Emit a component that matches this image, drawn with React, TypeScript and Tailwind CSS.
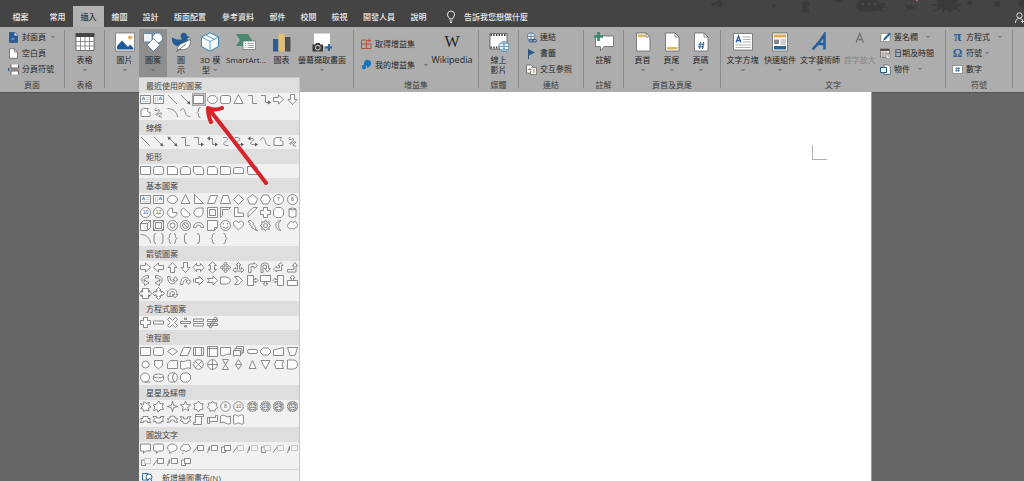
import React from 'react';

type Shape = { d: string; light?: string; fill?: string; blue?: string; t?: string };

const s = (d: string, t?: string): Shape => ({ d, t });

const circ = (cx: number, cy: number, r: number) =>
  `M${cx - r} ${cy}a${r} ${r} 0 1 0 ${2 * r} 0a${r} ${r} 0 1 0 ${-2 * r} 0Z`;

const oval = (cx: number, cy: number, rx: number, ry: number) =>
  `M${cx - rx} ${cy}a${rx} ${ry} 0 1 0 ${2 * rx} 0a${rx} ${ry} 0 1 0 ${-2 * rx} 0Z`;

const star = (n: number, outer: number, inner: number) => {
  const pts: string[] = [];
  for (let i = 0; i < n * 2; i++) {
    const r = i % 2 === 0 ? outer : inner;
    const a = (Math.PI * i) / n - Math.PI / 2;
    pts.push(`${(6.5 + r * Math.cos(a)).toFixed(2)} ${(6.5 + r * Math.sin(a)).toFixed(2)}`);
  }
  return `M${pts.join('L')}Z`;
};

const textBox: Shape = { d: 'M1.5 2.5H11.5V10.5H1.5Z', light: 'M7.5 4.5H10.5M7.5 6.5H10.5M3 8.700H10.5', blue: 'M3 7L4.5 3.800L6 7M3.500 6H5.500' };
const verticalBox: Shape = { d: 'M1.5 2.5H11.5V10.5H1.5Z', light: 'M3.500 4V9M5.500 4V9', blue: 'M7 7L8.500 3.800L10 7M7.500 6H9.500' };
const line = s('M2 2L11 11');
const lineArrow: Shape = { d: 'M2 2L10 10', fill: 'M11.5 11.500L7.800 10.300L10.300 7.800Z' };
const lineBoth: Shape = { d: 'M3 3L10 10', fill: 'M11.5 11.500L7.800 10.300L10.300 7.800ZM1.500 1.500L5.200 2.700L2.700 5.200Z' };
const rect = s('M1.5 2.5H11.5V10.5H1.5Z');
const ellipse = s(oval(6.5, 6.5, 5, 4));
const rounded = s('M3.5 2.5H9.5Q11.5 2.5 11.5 4.5V8.5Q11.5 10.5 9.5 10.5H3.5Q1.5 10.5 1.5 8.5V4.5Q1.5 2.5 3.5 2.5Z');
const triangle = s('M6.5 1.5L11 10.5H2Z');
const elbow = s('M2 2.5H6.5V10.5H11');
const elbowArrow: Shape = { d: 'M2 2.5H6.5V9.5H10', fill: 'M12 9.5L9 7.500V11.500Z' };
const elbowBoth: Shape = { d: 'M3 3.5H6.5V9.5H10', fill: 'M12 9.5L9 7.500V11.500ZM1 3.500L4 1.500V5.500Z' };
const curve = s('M4 2.5C10 2 9.5 5 6.5 6.5S4 11 9.5 10.5');
const curveArrow: Shape = { d: 'M3 2.5C9 2 8.5 5 6 6.5S4 10 9.500 9.5', fill: 'M12 9.500L9 7.500V11.500Z' };
const curveBoth: Shape = { d: 'M4 3.5C9 3 8.5 5 6 6.5S4 10 9.500 9.5', fill: 'M12 9.500L9 7.500V11.500ZM1.500 3.500L4.500 1.500V5.500Z' };
const wave = s('M1.5 5C3 1.500 5 2 6 5.500S8 11 11.500 10.500');
const freeform = s('M2 4L4.500 2.500H9.5C7.500 4.500 8 6 11 6.500V10.500H2Z');
const scribble = s('M4.500 2C2 3 3 5.500 5 4.500S8 3 7 5.500S2.500 8 4 9S8.500 5.500 9.500 7S6 9.500 7 10.500S9.500 10 9.500 11.500');
const arc = s('M1.5 2.5C7 2.5 11 6 11.5 11');
const leftBrace = s('M8.5 1.5Q6.5 1.5 6.5 3.5V5L5 6.5L6.5 8V9.5Q6.5 11.5 8.5 11.5');
const rightBrace = s('M4.5 1.5Q6.5 1.5 6.5 3.5V5L8 6.5L6.5 8V9.5Q6.5 11.5 4.5 11.5');
const arrowRight = s('M1.5 4.5H6.5V2L11.5 6.5L6.5 11V8.5H1.5Z');
const arrowLeft = s('M11.5 4.5H6.5V2L1.5 6.5L6.5 11V8.5H11.5Z');
const arrowDown = s('M4.5 1.5V6.5H2L6.5 11.5L11 6.5H8.5V1.5Z');
const arrowUp = s('M4.5 11.5V6.5H2L6.5 1.5L11 6.5H8.5V11.5Z');
const snip1 = s('M1.5 2.5H9L11.5 5V10.5H1.5Z');
const plus = s('M4.5 1.5H8.5V4.5H11.5V8.5H8.5V11.5H4.5V8.5H1.5V4.5H4.5Z');

const lineCallout = (lead: string, dim: boolean): Shape =>
  dim ? { d: lead, light: 'M5.5 3.5H11.5V8.5H5.5Z' } : { d: `${lead}M5.5 3.5H11.5V8.5H5.5Z` };
const leadA = 'M1 10.5L5.5 4.5';
const leadB = 'M1.5 11L3.5 4.5V8.5';
const leadC = 'M5.5 5H2.5V10.5H6.5V8.5';

const sections: { title: string; selected?: number; shapes: Shape[] }[] = [
  {
    title: '最近使用的圖案',
    selected: 4,
    shapes: [textBox, verticalBox, line, lineArrow, rect, ellipse, rounded, triangle, elbow, elbowArrow, arrowRight, arrowDown, freeform, scribble, arc, wave, leftBrace],
  },
  {
    title: '線條',
    shapes: [line, lineArrow, lineBoth, elbow, elbowArrow, elbowBoth, curve, curveArrow, curveBoth, wave, freeform, scribble],
  },
  {
    title: '矩形',
    shapes: [
      rect,
      rounded,
      snip1,
      s('M4 2.5H9L11.5 5V10.5H1.5V5Z'),
      s('M1.5 2.5H9L11.5 5V10.5H4L1.5 8Z'),
      s('M3.5 2.5H9L11.5 5V10.5H1.5V4.5Q1.5 2.5 3.5 2.5Z'),
      s('M1.5 2.5H9.5Q11.5 2.5 11.5 4.5V10.5H1.5Z'),
      s('M3.5 3.5H9.5Q11.5 3.5 11.5 5.5V9.5H1.5V5.5Q1.5 3.5 3.5 3.5Z'),
      s('M1.5 2.5H9.5Q11.5 2.5 11.5 4.5V10.5H3.5Q1.5 10.5 1.5 8.5Z'),
    ],
  },
  {
    title: '基本圖案',
    shapes: [
      textBox,
      verticalBox,
      ellipse,
      triangle,
      s('M2.5 1.5V10.5H11.5Z'),
      s('M4.5 2.5H11.5L8.5 10.5H1.5Z'),
      s('M4 2.5H9L11.5 10.5H1.5Z'),
      s('M6.5 1.5L11.5 6.5L6.5 11.5L1.5 6.5Z'),
      s('M6.5 1.5L11.5 5.5L9.5 11H3.5L1.5 5.5Z'),
      s('M4 2H9L11.5 6.5L9 11H4L1.5 6.5Z'),
      s(circ(6.5, 6.5, 5), '7'),
      s(circ(6.5, 6.5, 5), '8'),
      s(circ(6.5, 6.5, 5), '10'),
      s(circ(6.5, 6.5, 5), '12'),
      s('M6.5 6.5V2A4.7 4.7 0 1 0 11 6.5Z'),
      s('M4.500 2C.5 4 1 10 6 11C9 11.500 11 9.500 11 8Z'),
      s('M6.5 2H11V6.5A4.5 4.5 0 1 1 6.5 2Z'),
      s('M1.5 1.5H11.5V11.5H1.5ZM3.5 3.5H9.5V9.5H3.5Z'),
      s('M1.5 1.5H11.5L9.5 3.5H3.5V9.5L1.5 11.5Z'),
      s('M2.5 1.5H6V7H11.5V10.5H2.5Z'),
      s('M7.5 1.5H11.5L2 11V6.5Z'),
      plus,
      s('M4 1.5H9L11.5 4V9L9 11.5H4L1.5 9V4Z'),
      s('M3 3Q6.5 1 10 3V10.5Q6.5 12.5 3 10.5ZM3 3Q6.5 5 10 3'),
      s('M1.5 4.5H8.5V11.5H1.5ZM1.5 4.5L4.5 1.5H11.5V8.5L8.5 11.5M8.5 4.5L11.5 1.5'),
      s('M1.5 1.5H11.5V11.5H1.5ZM3.5 3.5H9.5V9.5H3.5ZM1.5 1.5L3.5 3.5M11.5 1.5L9.5 3.5M1.5 11.5L3.5 9.5M11.5 11.5L9.5 9.5'),
      s(circ(6.5, 6.5, 5) + circ(6.5, 6.5, 2.5)),
      s(circ(6.5, 6.5, 5) + circ(6.5, 6.5, 3) + 'M4.500 4.500L8.500 8.500'),
      s('M1.5 8.5A5 5 0 0 1 11.5 8.5H9A2.5 2.5 0 0 0 4 8.5Z'),
      s('M1.5 1.5H11.5V8.5L8.5 11.5H1.5ZM11.5 8.5H8.5V11.5'),
      s(circ(6.5, 6.5, 5) + 'M3.5 7.5Q6.5 11 9.5 7.5M4.5 4V5.5M8.5 4V5.5'),
      s('M6.5 11L2 6.5C0 3 4.5 0 6.5 4C8.5 0 13 3 11 6.5Z'),
      s('M2 2L5 1.5L8 5L7 5.5L10 8.5L9 9L11.5 12L5.5 8.5L6.5 8L3.5 5.5L4.5 5Z'),
      s(star(8, 5.4, 3.6) + circ(6.5, 6.5, 2)),
      s('M9 1.5C2 2 2 11 9 11.5C5.5 9 5.5 4 9 1.5Z'),
      s('M3 9C.5 8 1 5 3 5C3 2 6 2 7 3.5C9 1.5 11 3 10.5 4.5C12.5 6 11.5 8.5 9.5 8.5C9 10.5 6.5 10.5 6 9C5 10.5 3.5 10 3 9Z'),
      arc,
      s('M4 1.5Q2 1.5 2 4V9Q2 11.5 4 11.5M9 1.5Q11 1.5 11 4V9Q11 11.5 9 11.5'),
      s('M5 1.5Q3.5 1.5 3.5 3.5V5L2 6.5L3.5 8V9.5Q3.5 11.5 5 11.5M8 1.5Q9.5 1.5 9.5 3.5V5L11 6.5L9.5 8V9.5Q9.5 11.5 8 11.5'),
      s('M8 1.5Q5.5 1.5 5.5 4V9Q5.5 11.5 8 11.5'),
      s('M5 1.5Q7.5 1.5 7.5 4V9Q7.5 11.5 5 11.5'),
      leftBrace,
      rightBrace,
    ],
  },
  {
    title: '箭號圖案',
    shapes: [
      arrowRight,
      arrowLeft,
      arrowUp,
      arrowDown,
      s('M1 6.5L4.500 2.500V4.500H8.500V2.500L12 6.5L8.500 10.500V8.500H4.500V10.500Z'),
      s('M6.5 1L10.500 4.500H8.500V8.500H10.500L6.5 12L2.500 8.500H4.500V4.500H2.500Z'),
      s('M6.5 1L8.5 3.500H7.200V5.800H9.500V4.500L12 6.5L9.500 8.500V7.200H7.200V9.500H8.5L6.5 12L4.5 9.500H5.800V7.200H3.500V8.5L1 6.5L3.500 4.5V5.800H5.800V3.500H4.5Z'),
      s('M6.5 1.5L9 4H7.5V8H9.5V6.5L12 9L9.5 11.5V10H3.5V11.5L1 9L3.5 6.5V8H5.5V4H4Z'),
      s('M2.5 11.5V5Q2.5 3 4.5 3H8V1.5L11.5 4.5L8 7.5V5.5H5V11.5Z'),
      s('M2 11.5V5Q2 2 5.5 2H7Q9.5 2 9.5 5V7.5H11.5L8.5 11L5.5 7.5H7.5V5Q7.5 4 6.5 4H5Q4 4 4 5V11.5Z'),
      s('M1.5 8L4.5 5.5V7H7.5V4.5H6L8.5 1.5L11 4.5H9.5V9.5H4.5V11Z'),
      s('M1.5 8.5H8V5H6.5L9 1.5L11.5 5H10V11H1.5Z'),
      s('M9.5 1.500C2 1.500 1 7.500 5.500 9.500V11.500L10 9L5.500 6V7.500C3.500 5.500 5.500 4 9.500 4Z'),
      s('M3.500 1.500C11 1.500 12 7.500 7.500 9.500V11.500L3 9L7.500 6V7.500C9.500 5.500 7.500 4 3.500 4Z'),
      s('M1.500 2.500H4C4 8 7.500 8.500 8.500 6H7L9.500 2.500L12 6H10.500C9 11.500 1.500 11.500 1.500 2.500Z'),
      s('M1.500 10.500H4C4 5 7.500 4.500 8.500 7H7L9.500 10.500L12 7H10.500C9 1.500 1.500 1.500 1.500 10.500Z'),
      s('M1.5 4.5V8.5M3.5 4.5H7V2L11.5 6.5L7 11V8.5H3.5Z'),
      s('M1.5 4.5H7V2L11.5 6.5L7 11V8.5H1.5L3 6.5Z'),
      s('M1.5 3H7.5Q11.5 4 11.5 6.5T7.5 10H1.5Z'),
      s('M2.5 2.5H6.5L10.5 6.5L6.5 10.5H2.5L6 6.5Z'),
      s('M1.5 1.5H7.5V11.5H1.5ZM7.5 5.5H9.5V4L12 6.5L9.5 9V7.5H7.5'),
      s('M1.5 1.5H11.5V7.5H1.5ZM5.5 7.5V9.5H4L6.5 12L9 9.5H7.5V7.5'),
      s('M5.5 1.5H11.5V11.5H5.5ZM5.5 5.5H3.5V4L1 6.5L3.5 9V7.5H5.5'),
      s('M1.5 6.5H11.5V11.5H1.5ZM5.5 6.5V4H4L6.5 1L9 4H7.5V6.5'),
      s('M3.500 1.500H9.500V5H10.500V3.500L12.500 6.500L10.500 9.500V8H9.500V11.500H3.500V8H2.500V9.500L.5 6.500L2.500 3.500V5H3.500Z'),
      s('M6.500 .5L9 3H7.800V4H9V5.200H10V4L12.500 6.500L10 9V7.800H9V9H7.800V10H9L6.500 12.500L4 10H5.200V9H4V7.800H3V9L.5 6.500L3 4V5.200H4V4H5.200V3H4Z'),
      s('M1.500 9.500C0 4 4 2 6.500 2C10 2 11.500 5 10.500 7.500H12L9 11L6.500 7.500H8.500C9 5 7 4 6 4.500C4 5 3.500 7 4 9.500ZM4 9.500H6.500V7.500'),
    ],
  },
  {
    title: '方程式圖案',
    shapes: [
      plus,
      s('M1.5 5H11.5V8H1.5Z'),
      s('M3.5 1.5L6.5 4.5L9.5 1.5L11.5 3.5L8.5 6.5L11.5 9.5L9.5 11.5L6.5 8.5L3.5 11.5L1.5 9.5L4.5 6.5L1.5 3.5Z'),
      s('M1.5 5.5H11.5V7.5H1.5ZM5.5 2H7.5V3.5H5.5ZM5.5 9.5H7.5V11H5.5Z'),
      s('M1.5 3H11.5V5.5H1.5ZM1.5 7.5H11.5V10H1.5Z'),
      s('M1.5 3.5H11.5V5.5H1.5ZM1.5 7.5H11.5V9.5H1.5ZM9 1L11 2L5 12L3 11Z'),
    ],
  },
  {
    title: '流程圖',
    shapes: [
      rect,
      rounded,
      s('M6.5 3L11.5 6.5L6.5 10L1.5 6.5Z'),
      s('M4.5 2.5H12L8.5 10.5H1Z'),
      s('M1.5 2.5H11.5V10.5H1.5ZM3.5 2.5V10.5M9.5 2.5V10.5'),
      s('M1.5 1.5H11.5V11.5H1.5ZM3.5 1.5V11.5M1.5 3.5H11.5'),
      s('M1.5 2.5H11.5V9.5Q9 8 6.5 10T1.5 10Z'),
      s('M1.5 5.5H8.5V11Q5 9.5 1.5 11ZM3 5.5V3.5H10V9H8.5M4.5 3.5V1.5H11.5V7.5H10'),
      s('M3 4.5H10Q11.5 4.5 11.5 6.5T10 8.5H3Q1.5 8.5 1.5 6.5T3 4.5Z'),
      s('M4 3H9L11.5 5.5V7.5L9 10H4L1.5 7.5V5.5Z'),
      s('M1.5 5L11.5 2.5V10.5H1.5Z'),
      s('M1.5 2.5H11.5L9 10.5H4Z'),
      s(circ(6.5, 6.5, 3.5)),
      s('M2.5 2.5H10.5V7.5L6.5 11L2.5 7.5Z'),
      s('M4.5 2.5H11.5V10.5H1.5V5.5Z'),
      s('M1.5 3Q4 4.5 6.5 3T11.5 2.5V10.5Q9 9 6.5 10.5T1.5 10.5Z'),
      s(circ(6.5, 6.5, 4.8) + 'M3 3L10 10M10 3L3 10'),
      s(circ(6.5, 6.5, 4.8) + 'M6.5 1.5V11.5M1.5 6.5H11.5'),
      s('M3.5 1.5H9.5L3.5 11.5H9.5Z'),
      s('M6.5 1.5L9.5 6.5L6.5 11.5L3.5 6.5ZM3.5 6.5H9.5'),
      s('M6.5 2.5L10 10.5H3Z'),
      s('M2 2.5H11L6.5 11Z'),
      s('M4 2.5H11.5Q8.5 6.5 11.5 10.5H4Q1 6.5 4 2.5Z'),
      s('M1.5 2H6.5Q11.5 2 11.5 6.5T6.5 11H1.5Z'),
      s(circ(6, 6.5, 4.5) + 'M6 11H11.5'),
      s(oval(6.5, 5, 5, 2) + 'M1.5 5V8.5Q2 10.5 6.5 10.5T11.5 8.5V5'),
      s('M4.5 2H9Q11.5 3 11.5 6.5T9 11H4.5Q2 10 2 6.5T4.5 2ZM9 2Q6.5 3 6.5 6.5T9 11'),
      s('M4 2H9L11.5 4.5V8.5L9 11H4L1.5 8.5V4.5Z'),
    ],
  },
  {
    title: '星星及綵帶',
    shapes: [
      s('M5 1.500L7 3.500L10.500 2.500L9.500 5L12 7L9.500 8L10 11L7 10L4.500 11.500L4 9L1.500 8.500L3.500 6.500L1.500 3.500L4.500 4.500Z'),
      s('M7 1L8.500 4L11.500 3.500L10 6.500L11.500 9.500L8.500 9.500L6 12L5 9.500L1.500 10.500L3 7L1 5L4 4.500Z'),
      s(star(4, 5.2, 1.6)),
      s(star(5, 5.4, 2.4)),
      s(star(6, 5.4, 3.6)),
      s(star(7, 5.4, 3.8)),
      s(circ(6.5, 6.5, 4.8), '8'),
      s(circ(6.5, 6.5, 4.8), '10'),
      { d: star(12, 5.4, 4.3) + circ(6.5, 6.5, 3.4), t: '12' },
      { d: star(14, 5.4, 4.3) + circ(6.5, 6.5, 3.4), t: '16' },
      { d: star(16, 5.4, 4.3) + circ(6.5, 6.5, 3.4), t: '24' },
      { d: star(18, 5.4, 4.3) + circ(6.5, 6.5, 3.4), t: '32' },
      s('M1 9.5L2.5 7.5L1.5 5.5H4V3.5H9V5.5H11.5L10.5 7.5L12 9.5H8.5V8H4.5V9.5Z'),
      s('M1 3.5L2.5 5.5L1.5 8.5H4V10H9V8.5H11.5L10.5 5.5L12 3.5H8.5V5H4.5V3.5Z'),
      s('M1 9.5L2.5 7.5L1.5 5.5L4 5V3.5Q6.5 2.5 9 3.5V5L11.5 5.5L10.5 7.5L12 9.5L8.5 9V7.5Q6.5 6.5 4.5 7.5V9Z'),
      s('M1 3.5L2.5 5.5L1.5 8L4 8.5V10Q6.5 11 9 10V8.5L11.5 8L10.5 5.5L12 3.5L8.5 4V5.5Q6.5 6.5 4.5 5.5V4Z'),
      s('M3.5 1.5H11.5V3.5H9.5V11.5H1.5V9.5H3.5ZM3.5 3.5H9.5'),
      s('M1.5 4.5H9.5V2.5H11.5V8.5H3.5V10.5H1.5ZM3.5 4.5V8.5'),
      s('M1.5 3Q4 1 6.5 3T11.5 3V10.5Q9 12 6.5 10T1.5 10Z'),
      s('M1.5 2.5Q3 1 4.5 2.5T8 2.5T11.5 2.5V10.5Q10 12 8 10.5T4.5 10.5T1.5 10.5Z'),
    ],
  },
  {
    title: '圖說文字',
    shapes: [
      s('M1.5 2H11.5V9H6.5L4.5 11.5V9H1.5Z'),
      s('M3 2H10Q11.5 2 11.5 3.5V7.5Q11.5 9 10 9H6.5L4.5 11.5V9H3Q1.5 9 1.5 7.5V3.5Q1.5 2 3 2Z'),
      s('M4 9.5C0 7 1 2 6.5 2S13 9 6.5 9.5L3.5 11.5Z'),
      s('M4 9C.5 8.5 1 5 3 5C3 2 6 1.5 7 3C9 1.5 11 3 10.5 4.5C12.5 6 11.5 8.5 9 8.5C8 10 6 10 5.5 8.5ZM3 11.5H4.5'),
      lineCallout(leadA, false),
      lineCallout(leadB, false),
      lineCallout(leadC, false),
      lineCallout(leadA, true),
      lineCallout(leadB, true),
      lineCallout(leadC, true),
      lineCallout(leadA, true),
      lineCallout(leadB, true),
      lineCallout(leadC, true),
      lineCallout(leadA, false),
      lineCallout(leadB, false),
      lineCallout(leadC, false),
    ],
  },
];

function ShapeIcon({ shape }: { shape: Shape }) {
  return (
    <svg viewBox="0 0 13 13" className="size-[13px] shrink-0" fill="none" stroke="#707070" strokeWidth="0.8" aria-hidden="true">
      <path d={shape.d} fill={/Z/.test(shape.d) ? '#fbfbfb' : 'none'} fillRule="evenodd" />
      {shape.light && <path d={shape.light} stroke="#bcbcbc" />}
      {shape.blue && <path d={shape.blue} stroke="#4f7f9f" />}
      {shape.fill && <path d={shape.fill} fill="#5c5c5c" stroke="none" />}
      {shape.t && (
        <text x="6.5" y="8.3" fontSize="5" fontFamily="Liberation Sans, sans-serif" textAnchor="middle" fill="#555" stroke="none">
          {shape.t}
        </text>
      )}
    </svg>
  );
}

function Chevron({ dim }: { dim?: boolean }) {
  return (
    <svg viewBox="0 0 6 4" className="h-1 w-1.5 shrink-0" fill="none" stroke={dim ? '#8c8c8c' : '#555'} aria-hidden="true">
      <path d="M1.5 1L3 2.5L4.5 1" />
    </svg>
  );
}

function Group({ label, width, children }: { label: string; width: string; children: React.ReactNode }) {
  return (
    <>
      <section aria-label={label || undefined} className={`flex shrink-0 flex-col ${width}`}>
        <div className="flex h-12">{children}</div>
        <div className="h-[15px] text-center leading-[15px] text-[#3c3c3c]">{label}</div>
      </section>
      <div className="mt-px h-[58px] w-px shrink-0 bg-[#8a8a8a]" />
    </>
  );
}

function Big({ icon, lines, width, chevron, inlineChevron, active, dim }: {
  icon: React.ReactNode;
  lines: string[];
  width: string;
  chevron?: boolean;
  inlineChevron?: boolean;
  active?: boolean;
  dim?: boolean;
}) {
  return (
    <button
      type="button"
      disabled={dim}
      className={`flex h-12 shrink-0 flex-col items-center whitespace-nowrap pt-[3px] leading-[10px] ${width} ${active ? 'bg-[#8e8e8e]' : ''} ${dim ? 'text-[#868686]' : ''}`}
    >
      <span className="mb-[3px] flex h-5 items-center justify-center">{icon}</span>
      {lines.map((l, i) => (
        <span key={l} className="flex items-center gap-0.5">
          {l}
          {inlineChevron && i === lines.length - 1 && <Chevron />}
        </span>
      ))}
      {chevron && (
        <span className="flex h-[10px] items-center">
          <Chevron dim={dim} />
        </span>
      )}
    </button>
  );
}

function Small({ icon, label, chevron, tall, gap = 'gap-1' }: {
  icon: React.ReactNode;
  label: string;
  chevron?: boolean;
  tall?: boolean;
  gap?: string;
}) {
  return (
    <button type="button" className={`flex items-center whitespace-nowrap ${gap} ${tall ? 'h-[21px]' : 'h-4'}`}>
      <span className="flex items-center gap-[3px]">
        <span className="flex size-[11px] shrink-0 items-center justify-center">{icon}</span>
        {label}
      </span>
      {chevron && <Chevron />}
    </button>
  );
}

const I = ({ w = 20, h = 20, children }: { w?: number; h?: number; children: React.ReactNode }) => (
  <svg width={w} height={h} viewBox={`0 0 ${w} ${h}`} fill="none" aria-hidden="true">
    {children}
  </svg>
);

const icons = {
  cover: <I w={11} h={11}><path d="M1.500 .5H7L9.5 3V10.500H1.500Z" fill="#2b5c98" stroke="#1f4778" strokeWidth=".6" /><path d="M6.500 .5V3.5H9.700Z" fill="#e4edf6" /><path d="M3.500 7H6.500" stroke="#a9c4e2" /></I>,
  blank: <I w={11} h={11}><path d="M1.500 .8H6.5L9.5 4V10.3H1.500Z" fill="#fff" stroke="#555" strokeWidth=".7" /><path d="M6.5 1V4H9.5" stroke="#555" strokeWidth=".7" /></I>,
  pageBreak: <I w={11} h={11}><path d="M3 .5V4H10.5V.5M3 10.5V7H10.5V10.5" fill="#fff" stroke="#444" strokeWidth=".8" /><path d="M3 5.5H11" stroke="#555" strokeWidth=".6" strokeDasharray="1.5 .8" /><path d="M0 3.5L2 5.5L0 7.5Z" fill="#2b5c98" /></I>,
  table: <I><path d="M1 1.5H19V18.5H1Z" fill="#fff" stroke="#555" strokeWidth=".8" /><path d="M.8 1H19.2V5H.8Z" fill="#444" /><path d="M1 9.500H19M1 14H19M5.5 5V18.5M10 5V18.5M14.5 5V18.5" stroke="#777" strokeWidth=".8" /></I>,
  picture: <I><path d="M.5 1H19.5V19H.5Z" fill="#fff" stroke="#666" strokeWidth=".7" /><circle cx="15" cy="5.5" r="2" fill="#e3b04f" /><path d="M2 17.5V14L7 8.5L13 15L15 12.5L18.5 16V17.5Z" fill="#1f5b96" /></I>,
  shapes: <I><circle cx="14.5" cy="6" r="5" fill="#fff" stroke="#4b78a5" strokeWidth=".8" /><path d="M.5 1.5H9V10H.5Z" fill="#eef4fa" stroke="#4b78a5" strokeWidth=".8" /><path d="M10.5 6.5L17 13L10.5 19.5L4 13Z" fill="#fff" stroke="#4b78a5" strokeWidth=".8" /></I>,
  duck: <I><path d="M9.500 4.500C9.500 0 15.500 -.5 16 4L19 5L16 6.500C17 8 17.500 9.500 16 11L9 14H6C2 13 .5 9.500 1 5.500L5.500 7.500L11 7.500Z" fill="#235c95" /><path d="M6.500 18C6.500 13.500 9 12 12 11L19.500 7.5C20 14 17 18.500 9 17.500Z" fill="#fff" stroke="#555" strokeWidth=".7" /><path d="M5 20L15 12" stroke="#555" strokeWidth=".8" /></I>,
  cube: <I><path d="M10 .8L18.5 5V14.5L10 19.2L1.5 14.5V5Z" fill="#f5fafd" stroke="#3f86b5" /><path d="M1.5 5L10 9.5L18.5 5M10 9.5V19M6 3L14.5 7.5" stroke="#3f86b5" strokeWidth=".8" /></I>,
  smartArt: <I><path d="M0 2H12L16 8L12 14H0L4 8Z" fill="#4a8a70" /><path d="M7 9H19.5V17.5H7Z" fill="#fff" stroke="#666" strokeWidth=".7" /><path d="M9 11.500H10M9 13.500H10M9 15.500H10M11.5 11.500H18M11.5 13.500H18M11.5 15.500H18" stroke="#888" strokeWidth=".8" /></I>,
  chart: <I><path d="M1 7H6.5V19.5H1Z" fill="#255e97" /><path d="M6.5 1.5H12.5V19.5H6.5Z" fill="#e3be74" /><path d="M13 5H18.5V19.5H13Z" fill="#505050" /></I>,
  screenshot: <I><path d="M2 1.5H18V14H2Z" fill="#fff" /><path d="M.5 12.5H3L4 11H7.5L8.5 12.5H11V19.5H.5Z" fill="#3a3a3a" /><circle cx="5.800" cy="15.7" r="2.4" stroke="#ddd" fill="#3a3a3a" /><path d="M17 12V19M13.5 15.5H20.5" stroke="#24609b" strokeWidth="1.8" /></I>,
  store: <I w={11} h={11}><path d="M.5 2H5.5V10.5H.5ZM.5 6H10V10.5H5.5" stroke="#bb5038" strokeWidth="1" /><path d="M8.2 .5V4.500M6.2 2.500H10.2" stroke="#bb5038" strokeWidth="1" /></I>,
  myAddins: <I w={11} h={11}><path d="M6 .8C10 1 11 4 9.5 6.5L6.5 9L5.5 6.5L3 6C2.5 3 4 1 6 .8Z" fill="#1675b9" /><circle cx="3" cy="8" r="2.2" fill="#1675b9" /></I>,
  video: <I><path d="M1 1.5H18V17H1Z" fill="#fff" stroke="#555" strokeWidth=".8" /><path d="M1.5 3H18M1.5 15.5H18" stroke="#444" strokeWidth="2" strokeDasharray="1.5 1.2" /><circle cx="15" cy="14.5" r="5" fill="#eaf4fa" stroke="#377aa8" strokeWidth=".8" /><path d="M10 14.5H20M15 9.5V19.5M12 11Q15 13.5 18 11M12 18Q15 15.5 18 18" stroke="#377aa8" strokeWidth=".7" /></I>,
  link: <I w={11} h={11}><circle cx="5" cy="4.5" r="3.8" fill="#dfe9f1" stroke="#4c708f" strokeWidth=".8" /><path d="M1.5 4.5H8.5M5 1V8" stroke="#4c708f" strokeWidth=".7" /><rect x="3" y="7.5" width="4" height="2.5" rx="1.2" stroke="#255b8d" /><rect x="6.5" y="7.5" width="4" height="2.5" rx="1.2" stroke="#255b8d" /></I>,
  bookmark: <I w={11} h={11}><path d="M2.5 1V11" stroke="#355371" /><path d="M3 1.5L9 4.5L3 7.5Z" fill="#235c95" /></I>,
  crossRef: <I w={11} h={11}><path d="M.5 1H5L7 3V9H.5Z" fill="#fff" stroke="#555" strokeWidth=".7" /><path d="M5.5 3.5H10.5V10.5H4.5V7" fill="#f2efe4" stroke="#666" strokeWidth=".7" /><path d="M1.5 5.5H5M3.5 4L5 5.5L3.5 7M7 6H9M7 8H9" stroke="#7b6a4c" strokeWidth=".7" /></I>,
  comment: <I><path d="M1.500 4H19.5V14.5H10L6.5 18.5V14.5H1.500Z" fill="#fff" stroke="#5d6b66" strokeWidth=".8" /><path d="M4.5 0V9M0 4.5H9" stroke="#39886c" strokeWidth="2.6" /></I>,
  header: <I><path d="M3.5 1H13L17 5V19H3.5Z" fill="#fff" stroke="#666" strokeWidth=".8" /><path d="M13 1V5H17" stroke="#666" strokeWidth=".8" /><path d="M5 2.5H12V5H5Z" fill="#e0b65e" /></I>,
  footer: <I><path d="M3.5 1H13L17 5V19H3.5Z" fill="#fff" stroke="#666" strokeWidth=".8" /><path d="M13 1V5H17" stroke="#666" strokeWidth=".8" /><path d="M5 15H15.5V17.5H5Z" fill="#e0b65e" /></I>,
  pageNo: <I><path d="M3.5 1H13L17 5V19H3.5Z" fill="#fff" stroke="#666" strokeWidth=".8" /><path d="M13 1V5H17" stroke="#666" strokeWidth=".8" /><path d="M9.5 10L8.5 17M12.5 10L11.5 17M7.5 12.2H13.5M7 14.8H13" stroke="#2a629c" /></I>,
  textBox: <I><path d="M.5 1.5H19.5V18H.5Z" fill="#fff" stroke="#666" strokeWidth=".8" /><path d="M3 10.500L5.5 4L8 10.500M4 8.500H7" stroke="#275f99" strokeWidth="1.3" /><path d="M10 5H18M10 7.5H18M10 10H18M2.5 13H18M2.5 15.5H18" stroke="#aaa" strokeWidth=".9" /></I>,
  quickParts: <I><path d="M2.5 1H17.5V19H2.5Z" fill="#fff" stroke="#666" strokeWidth=".8" /><path d="M4 2.5H16V5.5H4Z" fill="#e0ab51" /><path d="M4 7.5H9V12H4Z" fill="#888" /><path d="M10.5 8H16M10.5 10H16M10.5 12H16" stroke="#999" /><path d="M4 14H16V17.5H4Z" fill="#2c6394" /></I>,
  wordArt: <I><path d="M2.500 17.500Q9 11.500 14.500 2.500L14.500 17.500M6 12H15" stroke="#285f9c" strokeWidth="2.5" /></I>,
  dropCap: <I><path d="M6 10.5L9.8 1.5L13.5 10.5M7.2 7.5H12.3" stroke="#747474" strokeWidth="1.3" /></I>,
  signature: <I w={11} h={11}><path d="M1 1.5H10V9.5H1Z" fill="#fff" stroke="#777" strokeWidth=".6" /><path d="M3 9L4 6L9.5 .5L11 2L5.5 7.5Z" fill="#28639d" /></I>,
  date: <I w={11} h={11}><path d="M.5 1H9.5V9H.5Z" fill="#fff" stroke="#555" strokeWidth=".7" /><path d="M.5 1H9.5V3H.5Z" fill="#5d4c43" /><path d="M.5 5H9.5M.5 7H9.5M3 3V9M6 3V9" stroke="#877164" strokeWidth=".7" /><circle cx="8.2" cy="8.2" r="2.5" fill="#eee" stroke="#777" strokeWidth=".7" /><path d="M8.2 6.5V8.2H9.5" stroke="#555" strokeWidth=".6" /></I>,
  object: <I w={11} h={11}><path d="M4 .8H8L10.3 3V10.3H4Z" fill="#fff" stroke="#3c6075" strokeWidth=".8" /><path d="M.5 3.5H6.5V8.5H.5Z" fill="#e9f3fa" stroke="#245b82" /></I>,
  number: <I w={11} h={11}><path d="M.5 1.5H10.5V9.5H.5Z" fill="#fff" stroke="#777" strokeWidth=".7" /><path d="M5 3L4.5 8M7 3L6.5 8M3.5 4.5H8M3.3 6.5H7.7" stroke="#2a629c" strokeWidth=".7" /></I>,
};

const tabs = ['檔案', '常用', '插入', '繪圖', '設計', '版面配置', '參考資料', '郵件', '校閱', '檢視', '開發人員', '說明'];

function TitleBar() {
  return (
    <header className="relative flex h-[27px] shrink-0 items-end overflow-hidden bg-[#444444] pl-[5px] text-[#ececec]">
      <svg className="absolute right-0 top-0 h-4 w-[400px]" viewBox="0 0 400 16" fill="#3a3a3a" aria-hidden="true">
        <path d="M86 4L92 2L96 0L98 3L102 4L98 5L97 8L93 5L88 6Z" />
        <circle cx="150" cy="6" r="2" />
        <path d="M177 2L183 0L186 3L184 7L186 12L181 13L177 11L179 7Z" />
        <path d="M208 0H220L216 3L212 1Z" />
        <path d="M232 6Q233 1 237 0H252L256 4L262 2L260 6L264 8L258 8L260 12L254 10Q245 13 240 11Q233 11 232 6Z" />
        <g fill="#484848"><circle cx="239" cy="4" r="1.500" /><circle cx="245" cy="4" r="1.500" /><circle cx="251" cy="4" r="1.500" /></g>
        <path d="M280 4L285 6L288 3L288 6L294 5L289 8L292 10L286 9L281 12L283 8Z" />
        <path d="M306 4L315 4L313 0H334L331 4L340 5L332 7L338 12L330 9L326 13L323 9L318 13L319 8L308 12L315 7Z" />
        <path d="M338 0L343 3L346 0L349 4L345 5Z" />
        <circle cx="373" cy="4" r="3" />
        <path d="M394 4L397 0H400V10Z" />
        <circle cx="293" cy="0" r="1.200" fill="#c66a62" />
      </svg>
      <nav className="flex h-[21px]" aria-label="功能區索引標籤">
        {tabs.map((t, i) => (
          <button
            key={t}
            type="button"
            className={`h-full text-center font-medium ${t.length > 2 ? 'w-12' : 'w-[31px]'} ${i === 0 ? 'mr-1.5' : ''} ${t === '插入' ? 'bg-[#b2b2b2] text-[#333333]' : ''}`}
          >
            {t}
          </button>
        ))}
      </nav>
      <button type="button" className="ml-3 flex h-[21px] items-center gap-2 font-medium">
        <svg viewBox="0 0 10 13" className="h-[13px] w-2.5" fill="none" stroke="#eee" aria-hidden="true">
          <path d="M3.5 9C3.5 7.5 1.5 7 1.5 4.5A3.5 3.5 0 0 1 8.5 4.5C8.5 7 6.5 7.5 6.5 9ZM3.5 11H6.5M4 12.5H6" />
        </svg>
        告訴我您想做什麼
      </button>
      <svg viewBox="0 0 10 12" className="absolute right-0 top-3 h-3 w-2.5" fill="none" stroke="#ddd" aria-hidden="true">
        <circle cx="5.5" cy="3.5" r="2.7" />
        <path d="M1.500 11Q1.500 6.5 5.5 6.5Q7.500 6.5 8.500 8M8.500 7.500V11M7 9.500H10" />
      </svg>
    </header>
  );
}

function Ribbon() {
  return (
    <div className="flex h-[65px] shrink-0 overflow-hidden bg-[#adadad] pt-0.5">
      <Group label="頁面" width="w-16">
        <div className="flex flex-col pl-2">
          <Small icon={icons.cover} label="封面頁" chevron />
          <Small icon={icons.blank} label="空白頁" />
          <Small icon={icons.pageBreak} label="分頁符號" />
        </div>
      </Group>
      <Group label="表格" width="w-[39px]">
        <Big icon={icons.table} lines={['表格']} width="w-full" chevron />
      </Group>
      <Group label="" width="w-[248px]">
        <div className="flex pl-[5px]">
          <Big icon={icons.picture} lines={['圖片']} width="w-[29px]" chevron />
          <Big icon={icons.shapes} lines={['圖案']} width="w-7" chevron active />
          <Big icon={icons.duck} lines={['圖', '示']} width="w-7" />
          <Big icon={icons.cube} lines={['3D 模', '型']} width="w-[30px]" inlineChevron />
          <Big icon={icons.smartArt} lines={['SmartArt...']} width="w-[42px]" />
          <Big icon={icons.chart} lines={['圖表']} width="w-[29px]" />
          <Big icon={icons.screenshot} lines={['螢幕擷取畫面']} width="w-[52px]" chevron />
        </div>
      </Group>
      <Group label="增益集" width="w-[124px]">
        <div className="flex flex-col pl-[7px] pt-1">
          <Small icon={icons.store} label="取得增益集" tall />
          <Small icon={icons.myAddins} label="我的增益集" tall chevron gap="gap-2" />
        </div>
        <Big
          icon={<span className="font-['Liberation_Serif',serif] text-[16px] leading-5 text-[#222222]">W</span>}
          lines={['Wikipedia']}
          width="w-[46px] text-[9px]"
        />
      </Group>
      <Group label="媒體" width="w-[39px]">
        <Big icon={icons.video} lines={['線上', '影片']} width="w-full" />
      </Group>
      <Group label="連結" width="w-16">
        <div className="flex flex-col pl-[7px]">
          <Small icon={icons.link} label="連結" />
          <Small icon={icons.bookmark} label="書籤" />
          <Small icon={icons.crossRef} label="交互參照" />
        </div>
      </Group>
      <Group label="註解" width="w-[39px]">
        <Big icon={icons.comment} lines={['註解']} width="w-full" />
      </Group>
      <Group label="頁首及頁尾" width="w-24">
        <div className="flex pl-1">
          <Big icon={icons.header} lines={['頁首']} width="w-[29px]" chevron />
          <Big icon={icons.footer} lines={['頁尾']} width="w-[29px]" chevron />
          <Big icon={icons.pageNo} lines={['頁碼']} width="w-[29px]" chevron />
        </div>
      </Group>
      <Group label="文字" width="w-56">
        <div className="flex gap-px pl-[3px]">
          <Big icon={icons.textBox} lines={['文字方塊']} width="w-[37px]" chevron />
          <Big icon={icons.quickParts} lines={['快速組件']} width="w-9" chevron />
          <Big icon={icons.wordArt} lines={['文字藝術師']} width="w-[42px]" chevron />
          <Big icon={icons.dropCap} lines={['首字放大']} width="w-[35px]" chevron dim />
        </div>
        <div className="flex flex-col pl-[3px]">
          <Small icon={icons.signature} label="簽名欄" chevron gap="gap-[7px]" />
          <Small icon={icons.date} label="日期及時間" />
          <Small icon={icons.object} label="物件" chevron gap="gap-[7px]" />
        </div>
      </Group>
      <Group label="符號" width="w-[66px]">
        <div className="flex flex-col pl-1.5">
          <Small icon={<span className="font-['Liberation_Serif',serif] text-[14px] font-bold leading-none text-[#2a629c]">π</span>} label="方程式" chevron gap="gap-[7px]" />
          <Small icon={<span className="font-['Liberation_Serif',serif] text-[12px] font-bold leading-none text-[#2a629c]">Ω</span>} label="符號" chevron gap="gap-0.5" />
          <Small icon={icons.number} label="數字" />
        </div>
      </Group>
    </div>
  );
}

function ShapesMenu() {
  return (
    <div className="absolute left-[139px] top-[77px] w-[161px] border-r border-t border-[#c6c6c6] bg-[#f1f1f1] text-[#444444]">
      {sections.map((sec) => (
        <section key={sec.title} className="pb-px">
          <h2 className="h-[15px] bg-[#dedede] pl-[7px] leading-[15px] font-normal">{sec.title}</h2>
          <div className="grid grid-cols-12">
            {sec.shapes.map((shape, i) => (
              <button
                key={i}
                type="button"
                aria-label={`${sec.title} ${i + 1}`}
                className={`flex h-[13px] items-center justify-center ${sec.selected === i ? 'bg-[#c4c4c4] ring-1 ring-inset ring-[#a8a8a8]' : ''}`}
              >
                <ShapeIcon shape={shape} />
              </button>
            ))}
          </div>
        </section>
      ))}
      <button type="button" className="flex h-4 w-full items-center gap-2 border-t border-[#d4d4d4] pl-[3px]">
        <svg viewBox="0 0 12 12" className="size-3" fill="#fff" stroke="#2f6ca3" aria-hidden="true">
          <path d="M.5 1.5H6V8H.5Z" />
          <circle cx="7" cy="5" r="3" />
          <path d="M7.5 6L11.5 11H4Z" fill="#dceaf6" />
        </svg>
        新增繪圖畫布(N)
      </button>
    </div>
  );
}

export default function App() {
  return (
    <div className="relative flex h-screen flex-col overflow-hidden bg-[#666666] font-['Open_Sans','Noto_Sans_CJK_TC',sans-serif] text-[8px] text-[#262626]">
      <TitleBar />
      <Ribbon />
      <main className="flex flex-1 border-t border-[#555555] pl-[139px] pr-[152px]">
        <div className="-mt-px flex flex-1 items-start justify-end border-r border-[#9a9a9a] bg-white pr-11 pt-[53px]">
          <div className="size-[15px] border-b border-l border-[#b0b0b0]" />
        </div>
      </main>
      <ShapesMenu />
      <svg viewBox="0 0 70 86" className="pointer-events-none absolute left-[202px] top-[102px] h-[86px] w-[70px]" fill="none" stroke="#d8232a" strokeWidth="4" strokeLinecap="round" strokeLinejoin="round" aria-hidden="true">
        <path d="M64 81Q42 52 7 7M20 6Q13 9 6 6Q6 14 9 20" />
      </svg>
    </div>
  );
}
